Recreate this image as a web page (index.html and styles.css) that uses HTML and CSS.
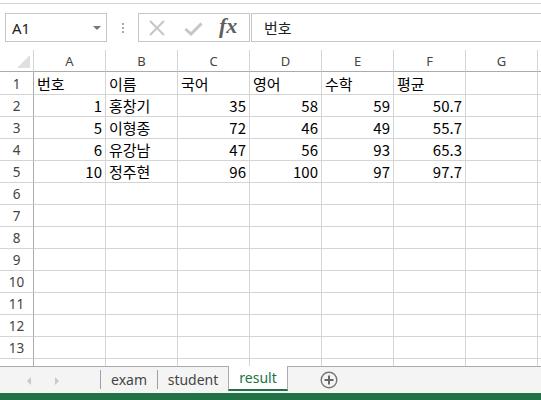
FILE: index.html
```html
<!DOCTYPE html>
<html lang="ko">
<head>
	<meta charset="UTF-8">
	<title>result</title>
	<link rel="stylesheet" href="styles.css">
</head>
<body>
	<div class="edge"></div>

	<div class="formula-bar">
		<div class="namebox">
			<span>A1</span>
			<span class="drop"></span>
		</div>
		<div class="dots"><i></i><i></i><i></i></div>
		<div class="fx-buttons">
			<svg class="btn-cancel" width="18" height="18" viewBox="0 0 18 18">
				<path d="M2 2 L16 16 M16 2 L2 16" stroke="#c6c6c6" stroke-width="2" fill="none"/>
			</svg>
			<svg class="btn-enter" width="19" height="14" viewBox="0 0 19 14">
				<path d="M1.5 7 L7 12 L17.5 1.5" stroke="#c6c6c6" stroke-width="3" fill="none"/>
			</svg>
			<span class="fx">fx</span>
		</div>
		<div class="formula-input">번호</div>
	</div>

	<section class="sheet" id="sheet"></section>

	<div class="tabbar">
		<div class="nav">
			<span class="arrow left"></span>
			<span class="arrow right"></span>
		</div>
		<span class="sep"></span>
		<div class="tab exam">exam</div>
		<span class="sep"></span>
		<div class="tab student">student</div>
		<div class="tab active">result</div>
		<svg class="add" width="18" height="18" viewBox="0 0 18 18">
			<circle cx="9" cy="9" r="7.8" stroke="#777" stroke-width="1.4" fill="none"/>
			<path d="M9 4.5 V13.5 M4.5 9 H13.5" stroke="#666" stroke-width="2"/>
		</svg>
	</div>

	<div class="status"></div>

	<script>
		let columns = ['A', 'B', 'C', 'D', 'E', 'F', 'G', ''],
			data = [
				['번호', '이름', '국어', '영어', '수학', '평균'],
				[1, '홍창기', 35, 58, 59, 50.7],
				[5, '이형종', 72, 46, 49, 55.7],
				[6, '유강남', 47, 56, 93, 65.3],
				[10, '정주현', 96, 100, 97, 97.7]
			],
			sheet = document.querySelector('#sheet');

		function cell(cls, text) {
			let div = document.createElement('div');
			div.className = cls;
			if (text !== undefined) div.textContent = text;
			sheet.appendChild(div);
		}

		cell('corner');
		columns.forEach(c => cell('col-head', c));

		// 13 full rows, the 14th only peeks out above the sheet tabs
		for (let r = 0; r < 14; r++) {
			cell('row-head', r < 13 ? r + 1 : undefined);
			columns.forEach((c, i) => {
				let value = data[r] ? data[r][i] : undefined;
				if (typeof value === 'number') cell('cell num', value);
				else cell('cell', value);
			});
		}
	</script>
</body>
</html>
```

FILE: styles.css
```css
* {
	box-sizing: border-box;
}

body {
	margin: 0;
	width: 541px;
	height: 400px;
	overflow: hidden;
	background: #fff;
	font-family: "Noto Sans", sans-serif;
}

.edge {
	height: 4px;
	border-bottom: 1px solid #d4d4d4;
}

.formula-bar {
	display: flex;
	height: 29px;
	margin-top: 9px;
	padding-left: 5px;
}

.namebox {
	width: 102px;
	border: 1px solid #c6c6c6;
	display: flex;
	align-items: center;
	justify-content: space-between;
	padding: 0 5px 0 6px;
	font-size: 15px;
	color: #222;
}

.drop {
	width: 0;
	height: 0;
	border-left: 4px solid transparent;
	border-right: 4px solid transparent;
	border-top: 4px solid #777;
	margin-top: 1px;
}

.dots {
	width: 31px;
	display: flex;
	flex-direction: column;
	align-items: center;
	justify-content: center;
	gap: 2px;
}

.dots i {
	width: 2px;
	height: 2px;
	background: #a6a6a6;
}

.fx-buttons {
	width: 112px;
	border: 1px solid #c6c6c6;
	display: flex;
	align-items: center;
}

.btn-cancel {
	margin-left: 9px;
}

.btn-enter {
	margin-left: 18px;
	margin-top: 2px;
}

.fx {
	margin-left: 16px;
	font-family: "Liberation Serif", serif;
	font-style: italic;
	font-weight: bold;
	font-size: 22px;
	color: #5f5f5f;
	margin-top: -3px;
}

.formula-input {
	flex: 1;
	margin-left: 1px;
	border: 1px solid #c6c6c6;
	border-right: 0;
	display: flex;
	align-items: center;
	padding-left: 12px;
	font-family: "Noto Sans CJK KR", sans-serif;
	font-size: 15px;
	color: #222;
}

.sheet {
	margin-top: 8px;
	height: 316px;
	overflow: hidden;
	display: grid;
	grid-template-columns: 34px repeat(7, 72px) 1fr;
	grid-template-rows: 22px 23px;
	grid-auto-rows: 22px;
}

.sheet div {
	border-right: 1px solid #d4d4d4;
	border-bottom: 1px solid #d4d4d4;
	display: flex;
	align-items: center;
	overflow: hidden;
	white-space: nowrap;
}

.sheet .corner {
	position: relative;
	border-bottom-color: #ababab;
}

.corner::after {
	content: "";
	position: absolute;
	right: 3px;
	bottom: 3px;
	width: 0;
	height: 0;
	border-left: 13px solid transparent;
	border-bottom: 13px solid #dfdfdf;
}

.sheet .col-head {
	justify-content: center;
	border-bottom-color: #ababab;
	font-size: 13px;
	color: #444;
}

.sheet .row-head {
	justify-content: center;
	border-right-color: #ababab;
	font-size: 13.5px;
	color: #444;
	padding-top: 1px;
}

.sheet .cell {
	padding: 1px 3px 0;
	font-family: "Noto Sans CJK KR", sans-serif;
	font-size: 15px;
	line-height: 20px;
	color: #000;
}

.sheet .num {
	justify-content: flex-end;
}

.tabbar {
	height: 27px;
	border-top: 1px solid #ababab;
	background: #f4f4f4;
	display: flex;
	align-items: flex-start;
}

.nav {
	width: 100px;
	height: 26px;
	position: relative;
}

.arrow {
	position: absolute;
	top: 10px;
	width: 0;
	height: 0;
	border-top: 4px solid transparent;
	border-bottom: 4px solid transparent;
}

.arrow.left {
	left: 27px;
	border-right: 4px solid #c8c8c8;
}

.arrow.right {
	left: 55px;
	border-left: 4px solid #c8c8c8;
}

.sep {
	width: 1px;
	height: 19px;
	margin-top: 3px;
	background: #a0a0a0;
}

.tab {
	height: 25px;
	display: flex;
	align-items: center;
	justify-content: center;
	font-size: 14px;
	color: #444;
	padding-bottom: 1px;
}

.tab.exam {
	width: 56px;
}

.tab.student {
	width: 70px;
}

.tab.active {
	width: 60px;
	height: 25px;
	margin-top: -1px;
	background: #fff;
	border-left: 1px solid #ababab;
	border-right: 1px solid #ababab;
	border-bottom: 2px solid #217346;
	color: #217346;
}

.add {
	margin-left: 32px;
	margin-top: 4px;
}

.status {
	height: 7px;
	background: #217346;
}
```
